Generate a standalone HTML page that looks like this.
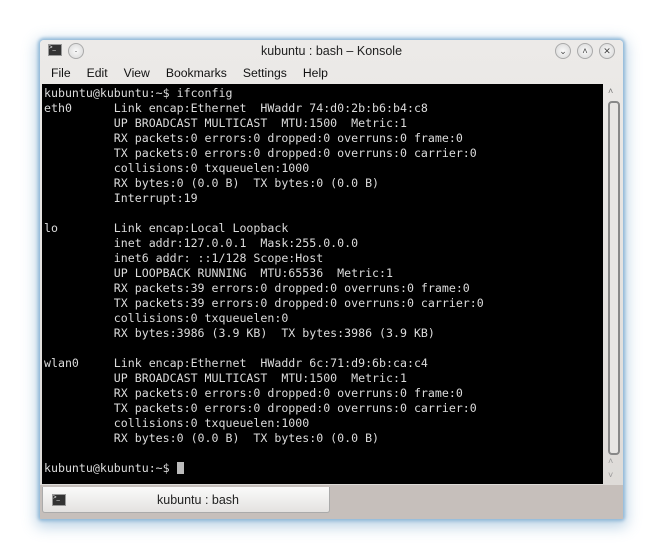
<!DOCTYPE html>
<html><head><style>
body{margin:0;width:663px;height:559px;background:#fff;position:relative;overflow:hidden;font-family:"Liberation Sans",sans-serif}
.win{position:absolute;left:40px;top:40px;width:583px;height:479px;background:linear-gradient(#eceae8,#dddad7);border-radius:4px 4px 2px 2px;box-shadow:0 0 3px 2px #8fb8d8,0 4px 14px 4px rgba(110,160,200,.45)}
.title{position:absolute;left:0;top:4px;width:100%;text-align:center;font-size:12.5px;color:#222}
.menu{position:absolute;top:26px;left:11px;font-size:12.2px;color:#111;word-spacing:0}
.menu span{margin-right:16px}
.term{position:absolute;left:2px;top:44px;width:561px;height:400px;background:#000;color:#dcdcdc;font-family:"DejaVu Sans Mono","Liberation Mono",monospace;font-size:11.6px;line-height:15px;white-space:pre;padding:2px 0 0 2px;box-sizing:border-box}
.btn{position:absolute;top:3px;width:14px;height:14px;border-radius:50%;background:radial-gradient(#fafafa,#d6d6d6);border:1px solid #aaa;font-size:9px;text-align:center;line-height:14px;color:#444}
.sb{position:absolute;left:566px;top:44px;width:15px;height:400px}
.thumb{position:absolute;left:2px;top:17px;width:8px;height:350px;border:2px solid #888;border-radius:4px;background:#e8e6e4}
.tabbar{position:absolute;left:0;top:445px;width:100%;height:34px;background:#c6bfbb}
.tab{position:absolute;left:2px;top:2px;width:286px;height:25px;background:linear-gradient(#fafafa,#e4e2e0);border:1px solid #aaa;border-top:none;border-radius:0 0 3px 3px;font-size:12.5px;color:#222}
.ic{position:absolute;width:12px;height:10px;background:#333;border:1px solid #999;color:#fff;font-size:6px;line-height:7px}
.cur{display:inline-block;width:7px;height:12px;background:#bbb;vertical-align:-2px}
</style></head><body>
<div class="win">
 <div class="ic" style="left:8px;top:4px">&gt;_</div>
 <div class="btn" style="left:28px">·</div>
 <div class="title">kubuntu : bash – Konsole</div>
 <div class="btn" style="left:515px">⌄</div>
 <div class="btn" style="left:537px">˄</div>
 <div class="btn" style="left:559px">✕</div>
 <div class="menu"><span>File</span><span>Edit</span><span>View</span><span>Bookmarks</span><span>Settings</span><span>Help</span></div>
 <div class="term">kubuntu@kubuntu:~$ ifconfig
eth0      Link encap:Ethernet  HWaddr 74:d0:2b:b6:b4:c8
          UP BROADCAST MULTICAST  MTU:1500  Metric:1
          RX packets:0 errors:0 dropped:0 overruns:0 frame:0
          TX packets:0 errors:0 dropped:0 overruns:0 carrier:0
          collisions:0 txqueuelen:1000
          RX bytes:0 (0.0 B)  TX bytes:0 (0.0 B)
          Interrupt:19

lo        Link encap:Local Loopback
          inet addr:127.0.0.1  Mask:255.0.0.0
          inet6 addr: ::1/128 Scope:Host
          UP LOOPBACK RUNNING  MTU:65536  Metric:1
          RX packets:39 errors:0 dropped:0 overruns:0 frame:0
          TX packets:39 errors:0 dropped:0 overruns:0 carrier:0
          collisions:0 txqueuelen:0
          RX bytes:3986 (3.9 KB)  TX bytes:3986 (3.9 KB)

wlan0     Link encap:Ethernet  HWaddr 6c:71:d9:6b:ca:c4
          UP BROADCAST MULTICAST  MTU:1500  Metric:1
          RX packets:0 errors:0 dropped:0 overruns:0 frame:0
          TX packets:0 errors:0 dropped:0 overruns:0 carrier:0
          collisions:0 txqueuelen:1000
          RX bytes:0 (0.0 B)  TX bytes:0 (0.0 B)

kubuntu@kubuntu:~$ <span class="cur"></span></div>
 <div class="sb">
  <div style="position:absolute;top:2px;left:2px;font-size:9px;color:#777">˄</div>
  <div class="thumb"></div>
  <div style="position:absolute;top:372px;left:2px;font-size:9px;color:#999">˄</div>
  <div style="position:absolute;top:386px;left:2px;font-size:9px;color:#999">˅</div>
 </div>
 <div class="tabbar"><div class="tab"><div class="ic" style="left:9px;top:7px">&gt;_</div><span style="position:absolute;left:114px;top:6px">kubuntu : bash</span></div></div>
</div>
</body></html>
